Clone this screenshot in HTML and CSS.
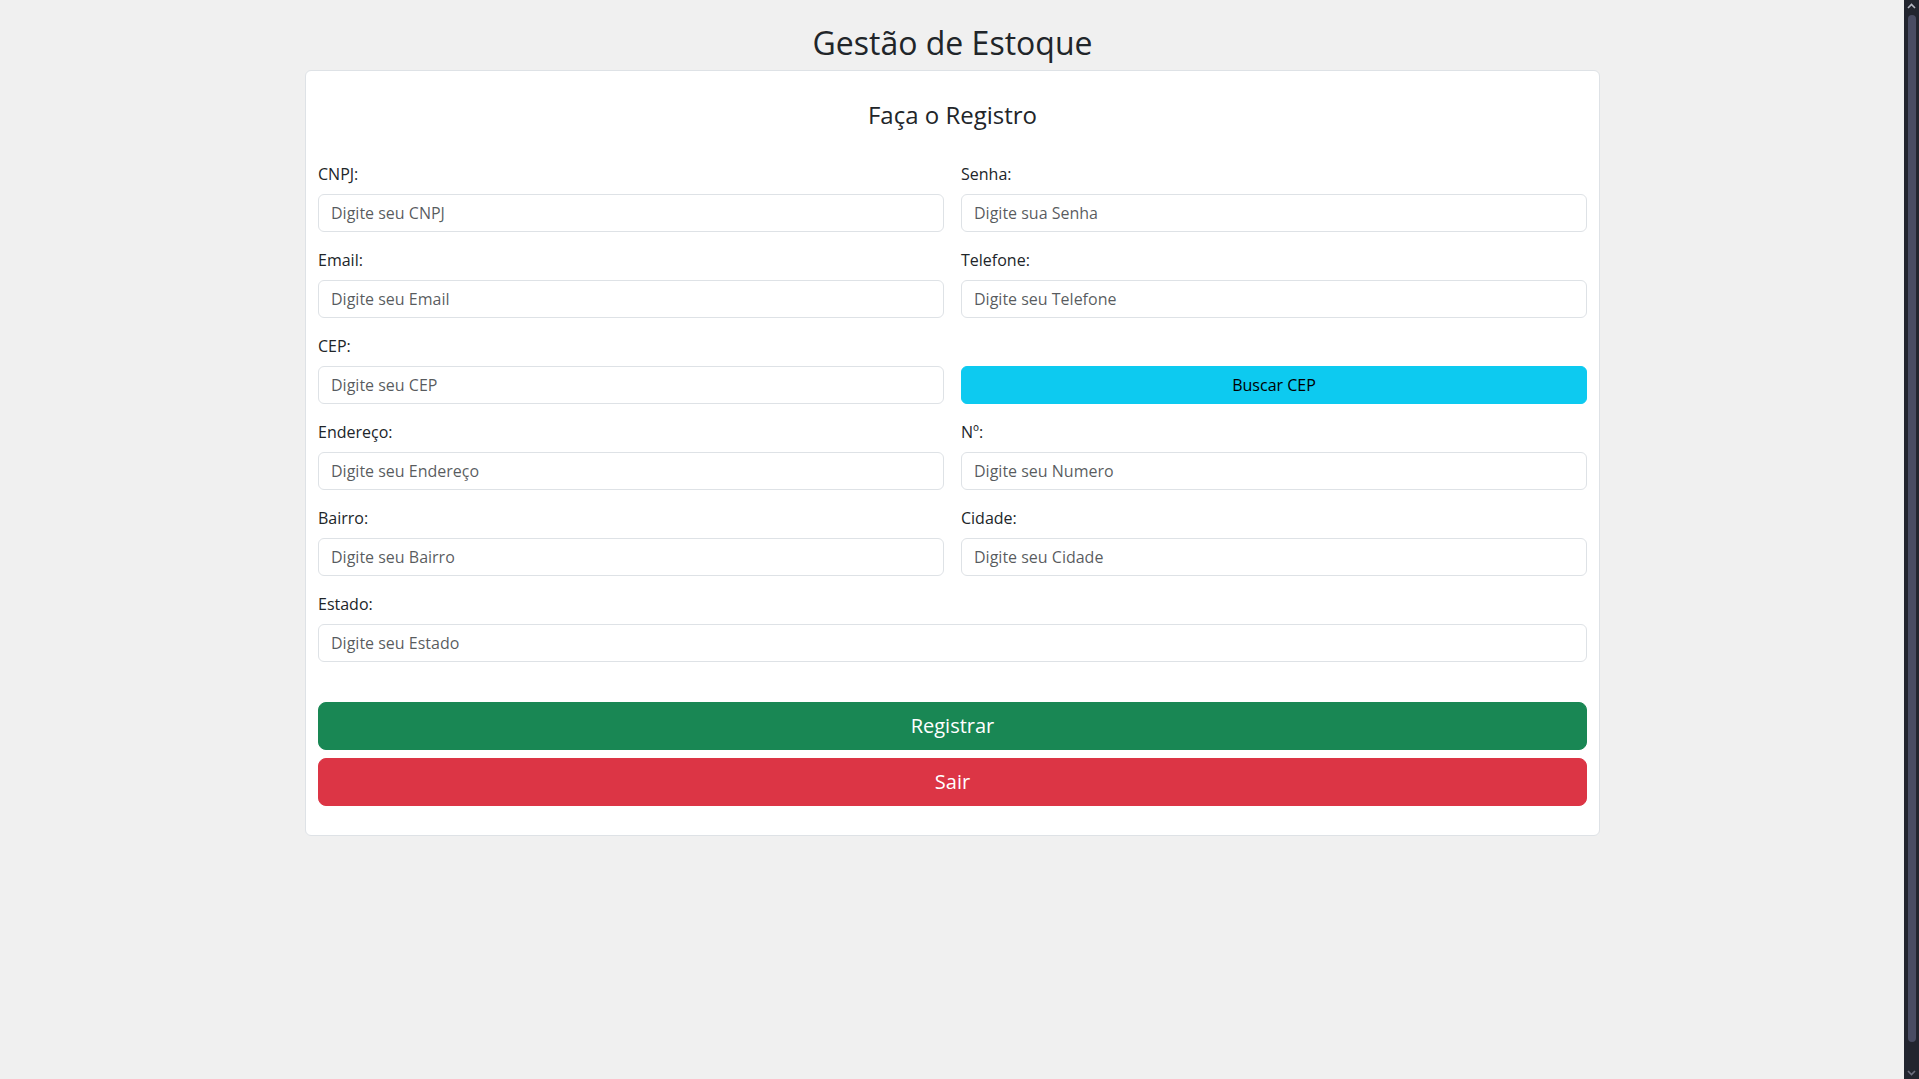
FILE: index.html
```html
<!DOCTYPE html>
<html lang="pt-BR">
<head>
<meta charset="utf-8">
<title>Gestão de Estoque</title>
<link rel="stylesheet" href="styles.css">
</head>
<body>
<div class="viewport">
  <main class="main">
    <div class="page">
      <h2 class="title">Gestão de Estoque</h2>
      <div class="card">
        <h4 class="card-title">Faça o Registro</h4>
        <form class="form-grid">
          <div class="field">
            <label class="label">CNPJ:</label>
            <input class="input" type="text" placeholder="Digite seu CNPJ">
          </div>
          <div class="field">
            <label class="label">Senha:</label>
            <input class="input" type="password" placeholder="Digite sua Senha">
          </div>
          <div class="field">
            <label class="label">Email:</label>
            <input class="input" type="text" placeholder="Digite seu Email">
          </div>
          <div class="field">
            <label class="label">Telefone:</label>
            <input class="input" type="text" placeholder="Digite seu Telefone">
          </div>
          <div class="field">
            <label class="label">CEP:</label>
            <input class="input" type="text" placeholder="Digite seu CEP">
          </div>
          <div class="field">
            <span class="label">&nbsp;</span>
            <button class="btn btn-info" type="button">Buscar CEP</button>
          </div>
          <div class="field">
            <label class="label">Endereço:</label>
            <input class="input" type="text" placeholder="Digite seu Endereço">
          </div>
          <div class="field">
            <label class="label">Nº:</label>
            <input class="input" type="text" placeholder="Digite seu Numero">
          </div>
          <div class="field">
            <label class="label">Bairro:</label>
            <input class="input" type="text" placeholder="Digite seu Bairro">
          </div>
          <div class="field">
            <label class="label">Cidade:</label>
            <input class="input" type="text" placeholder="Digite seu Cidade">
          </div>
          <div class="field field-full">
            <label class="label">Estado:</label>
            <input class="input" type="text" placeholder="Digite seu Estado">
          </div>
        </form>
        <button class="btn btn-lg btn-success" type="button">Registrar</button>
        <button class="btn btn-lg btn-danger" type="button">Sair</button>
      </div>
    </div>
  </main>
  <div class="scrollbar" aria-hidden="true">
    <div class="sb-btn">
      <svg width="15" height="15" viewBox="0 0 15 15"><polyline points="4,8 7.5,4.5 11,8" fill="none" stroke="#b4b6c2" stroke-width="1.6"/></svg>
    </div>
    <div class="sb-track"><div class="sb-thumb"></div></div>
    <div class="sb-btn">
      <svg width="15" height="15" viewBox="0 0 15 15"><polyline points="4,7 7.5,10.5 11,7" fill="none" stroke="#6e7080" stroke-width="1.6"/></svg>
    </div>
  </div>
</div>
</body>
</html>
```
FILE: styles.css
```css
* { box-sizing: border-box; }

html, body {
  margin: 0;
  padding: 0;
  background: #f0f0f0;
  overflow: hidden;
}

body {
  font-family: "Open Sans", "Noto Sans", "Liberation Sans", sans-serif;
  font-size: 16px;
  line-height: 1.5;
  color: #212529;
}

.viewport {
  display: flex;
  height: 100vh;
}

.main {
  flex: 1;
  min-width: 0;
  overflow: hidden;
  padding-left: 1px;
}

.scrollbar {
  width: 15px;
  flex: none;
  display: flex;
  flex-direction: column;
  background: #22252f;
}

.sb-btn {
  height: 15px;
  flex: none;
}

.sb-btn svg { display: block; }

.sb-track {
  flex: 1;
  padding: 0 3px 0 4px;
}

.sb-thumb {
  height: 1027px;
  background: #494c63;
  border-radius: 4px;
}

.page {
  max-width: 1295px;
  margin: 0 auto;
  padding-top: 24px;
}

.title {
  margin: 0 0 8px;
  font-size: 32px;
  font-weight: 500;
  line-height: 1.2;
  text-align: center;
  color: #212529;
}

.card {
  background: #fff;
  border: 1px solid #dee2e6;
  border-radius: 6px;
  padding: 12px;
}

.card-title {
  margin: 18px 0 32px;
  font-size: 24px;
  font-weight: 500;
  line-height: 1.2;
  text-align: center;
}

.form-grid {
  display: grid;
  grid-template-columns: 1fr 1fr;
  column-gap: 17px;
  row-gap: 16px;
  margin: 0;
}

.field {
  display: flex;
  flex-direction: column;
}

.field-full { grid-column: 1 / -1; }

.label {
  display: block;
  margin-bottom: 8px;
  line-height: 24px;
  font-size: 16px;
}

.input {
  display: block;
  width: 100%;
  height: 38px;
  padding: 6px 12px;
  font-family: inherit;
  font-size: 16px;
  line-height: 24px;
  color: #212529;
  background: #fff;
  border: 1px solid #dee2e6;
  border-radius: 6px;
  outline: none;
}

.input::placeholder { color: rgba(33, 37, 41, 0.75); opacity: 1; }

.btn {
  display: block;
  width: 100%;
  font-family: inherit;
  font-size: 16px;
  line-height: 24px;
  padding: 6px 12px;
  height: 38px;
  border: 1px solid transparent;
  border-radius: 6px;
  text-align: center;
  cursor: pointer;
}

.btn-info {
  background: #0dcaf0;
  border-color: #0dcaf0;
  color: #000;
}

.btn-lg {
  height: 48px;
  padding: 8px 16px;
  font-size: 20px;
  line-height: 30px;
  border-radius: 8px;
  color: #fff;
}

.btn-success {
  margin-top: 40px;
  background: #198754;
  border-color: #198754;
}

.btn-danger {
  margin-top: 8px;
  margin-bottom: 17px;
  background: #dc3545;
  border-color: #dc3545;
}
```
